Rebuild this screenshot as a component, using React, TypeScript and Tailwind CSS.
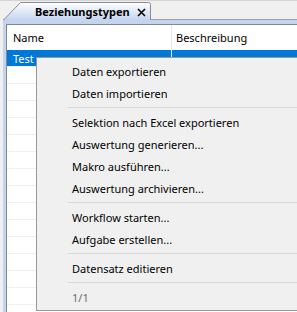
import React from 'react';

type Entry = { label: string; disabled?: boolean } | 'sep';

const menu: Entry[] = [
  { label: 'Daten exportieren' },
  { label: 'Daten importieren' },
  'sep',
  { label: 'Selektion nach Excel exportieren' },
  { label: 'Auswertung generieren...' },
  { label: 'Makro ausführen...' },
  { label: 'Auswertung archivieren...' },
  'sep',
  { label: 'Workflow starten...' },
  { label: 'Aufgabe erstellen...' },
  'sep',
  { label: 'Datensatz editieren' },
  'sep',
  { label: '1/1', disabled: true },
];

const Tab = () => (
  <div className="absolute left-[3px] top-[2px] z-10 w-[149px] h-[18px]">
    <svg width="149" height="18" className="absolute inset-0">
      <defs>
        <linearGradient id="tabg" x1="0" y1="0" x2="0" y2="1">
          <stop offset="0" stopColor="#ffffff" />
          <stop offset="1" stopColor="#c4d4ee" />
        </linearGradient>
      </defs>
      <path d="M0.5 18 L17.5 0.5 L145.5 0.5 Q147.5 0.5 147.5 2.5 L147.5 18 Z" fill="url(#tabg)" />
      <path d="M0.5 18 L17.5 0.5 L145.5 0.5 Q147.5 0.5 147.5 2.5 L147.5 18" fill="none" stroke="#898c95" strokeWidth="1" />
    </svg>
    <span className="absolute left-[32px] top-[2px] text-[11px] font-bold text-black leading-[16px]">Beziehungstypen</span>
    <svg width="9" height="9" viewBox="0 0 9 9" className="absolute left-[134px] top-[6px]">
      <path d="M1 1 L8 8 M8 1 L1 8" stroke="#000" strokeWidth="1.6" />
    </svg>
  </div>
);

export default function App() {
  return (
    <div className="relative w-[297px] h-[312px] overflow-hidden bg-[#f0f0f0] font-['Noto_Sans',sans-serif] text-[11px] text-black">
      <div className="h-[19px] border-t border-[#d4d4d4]" />
      <Tab />
      <div className="pl-[3px] h-[293px]">
        <div className="h-full bg-[#c4d4ee] border-t border-[#a0a0a0] pt-[4px] pl-[3px]">
          <div className="h-full bg-white border-t border-l border-[#828790]">
            <div className="flex h-[25px] items-center">
              <div className="w-[164px] pl-[6px] pt-[2px]">Name</div>
              <div className="h-full w-px bg-[#e5e5e5]" />
              <div className="pl-[4px] pt-[2px]">Beschreibung</div>
            </div>
            <div className="flex h-[17px] border-b border-[#f0f0f0]">
              <div className="w-[164px] pl-[6px] bg-[#0078d7] text-white leading-[17px]">Test</div>
              <div className="w-px bg-[#e5f1fb]" />
              <div className="flex-1 bg-[#0078d7]" />
            </div>
            {[...Array(14)].map((_, i) => (
              <div key={i} className="h-[17px] border-b border-[#f0f0f0]" />
            ))}
          </div>
        </div>
      </div>

      <div className="absolute left-[36px] top-[57px] w-[280px] h-[254px] bg-[#f0f0f0] border border-[#979797] py-[2px]">
        {menu.map((m, i) =>
          m === 'sep' ? (
            <div key={i} className="h-[7px] flex flex-col justify-center pl-[31px]">
              <div className="h-px bg-[#d7d7d7]" />
            </div>
          ) : (
            <div key={i} className={`h-[22px] flex items-center pl-[35px] pt-[2px] ${m.disabled ? 'text-[#6d6d6d]' : ''}`}>
              {m.label}
            </div>
          )
        )}
      </div>
    </div>
  );
}
